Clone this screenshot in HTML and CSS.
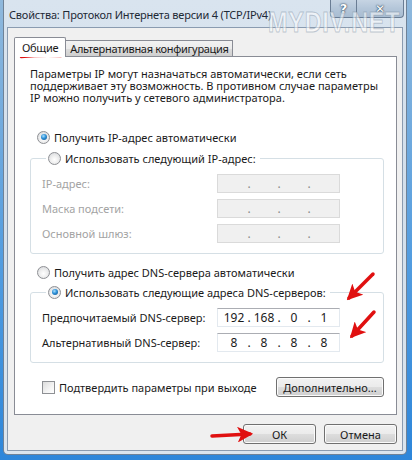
FILE: index.html
```html
<!DOCTYPE html>
<html lang="ru">
<head>
    <meta charset="UTF-8">
    <title>Свойства: Протокол Интернета версии 4 (TCP/IPv4)</title>
    <link rel="stylesheet" href="styles.css">
</head>
<body>
    <div class="window">
        <div class="titlebar">
            <span class="title">Свойства: Протокол Интернета версии 4 (TCP/IPv4)</span>
            <div class="caption-buttons">
                <div class="cap-btn help">?</div>
                <div class="cap-btn close">✕</div>
            </div>
        </div>
        <div class="watermark">MYDIV.NET</div>

        <div class="client">
            <div class="tabs">
                <div class="tab active">Общие</div>
                <div class="tab">Альтернативная конфигурация</div>
            </div>
            <div class="panel">
                <p class="desc">Параметры IP могут назначаться автоматически, если сеть<br>поддерживает эту возможность. В противном случае параметры<br>IP можно получить у сетевого администратора.</p>

                <div class="option first">
                    <span class="radio checked"></span>Получить IP-адрес автоматически
                </div>

                <fieldset class="group">
                    <legend><span class="radio"></span>Использовать следующий IP-адрес:</legend>
                    <div class="row disabled">
                        <span class="label">IP-адрес:</span>
                        <div class="ipbox off"><span></span><i>.</i><span></span><i>.</i><span></span><i>.</i><span></span></div>
                    </div>
                    <div class="row disabled">
                        <span class="label">Маска подсети:</span>
                        <div class="ipbox off"><span></span><i>.</i><span></span><i>.</i><span></span><i>.</i><span></span></div>
                    </div>
                    <div class="row disabled">
                        <span class="label">Основной шлюз:</span>
                        <div class="ipbox off"><span></span><i>.</i><span></span><i>.</i><span></span><i>.</i><span></span></div>
                    </div>
                </fieldset>

                <div class="option dns-auto">
                    <span class="radio"></span>Получить адрес DNS-сервера автоматически
                </div>

                <fieldset class="group dns">
                    <legend><span class="radio checked"></span>Использовать следующие адреса DNS-серверов:</legend>
                    <div class="row">
                        <span class="label">Предпочитаемый DNS-сервер:</span>
                        <div class="ipbox"><span>192</span><i>.</i><span>168</span><i>.</i><span>0</span><i>.</i><span>1</span></div>
                    </div>
                    <div class="row">
                        <span class="label">Альтернативный DNS-сервер:</span>
                        <div class="ipbox"><span>8</span><i>.</i><span>8</span><i>.</i><span>8</span><i>.</i><span>8</span></div>
                    </div>
                </fieldset>

                <div class="bottom-row">
                    <div class="check-opt"><span class="checkbox"></span>Подтвердить параметры при выходе</div>
                    <div class="btn advanced">Дополнительно...</div>
                </div>
            </div>

            <div class="dialog-buttons">
                <div class="btn ok">ОК</div>
                <div class="btn">Отмена</div>
            </div>
        </div>

        <!-- red marks drawn over the screenshot -->
        <svg class="marks" width="412" height="460" viewBox="0 0 412 460">
            <defs>
                <marker id="head" viewBox="0 0 10 10" refX="8" refY="5" markerWidth="4.5" markerHeight="4.5" orient="auto">
                    <path d="M0 0 L10 5 L0 10 L2.5 5 Z" fill="#e01010"/>
                </marker>
            </defs>
            <path d="M20 57 Q40 55 60 56" stroke="#e01010" stroke-width="2.5" fill="none" stroke-linecap="round"/>
            <path d="M372 274 L348 298" stroke="#e01010" stroke-width="3.5" stroke-linecap="round" marker-end="url(#head)"/>
            <path d="M373 312 L351 336" stroke="#e01010" stroke-width="3.5" stroke-linecap="round" marker-end="url(#head)"/>
            <path d="M211 436 L249 434" stroke="#e01010" stroke-width="3.5" stroke-linecap="round" marker-end="url(#head)"/>
        </svg>
    </div>
</body>
</html>
```

FILE: styles.css
```css
body {
    margin: 0;
    width: 412px;
    height: 460px;
    overflow: hidden;
    background: linear-gradient(180deg, #8fb8dc 0%, #4f9be0 60%, #2d86da 100%);
    font-family: "Noto Sans", sans-serif;
    font-size: 11px;
    color: #1a1a1a;
}
.window {
    position: relative;
    margin-left: 3px;
    width: 404px;
    height: 455px;
    background: linear-gradient(180deg, #d9e4ef 0%, #d3dfeb 40%, #dbe5ee 100%);
    border: 1px solid #6f8297;
    border-top: none;
    border-radius: 0 0 5px 5px;
    box-sizing: border-box;
    display: flex;
    flex-direction: column;
}
.titlebar {
    height: 27px;
    display: flex;
    align-items: flex-start;
    justify-content: space-between;
}
.title {
    margin: 7px 0 0 5px;
    font-size: 11px;
    letter-spacing: -0.2px;
    color: #1e2a36;
}
.caption-buttons {
    display: flex;
    margin-right: 2px;
}
.cap-btn {
    height: 18px;
    display: flex;
    align-items: center;
    justify-content: center;
    border: 1px solid #6a7d94;
    border-top: none;
    background: linear-gradient(180deg, #c6d4e3 0%, #b4c6d9 50%, #a9bdd2 100%);
    color: #fff;
    font-weight: bold;
    font-family: "DejaVu Sans", sans-serif;
    text-shadow: 0 0 2px #243a55, 0 0 1px #243a55;
    box-sizing: border-box;
}
.cap-btn.help {
    width: 27px;
    font-size: 13px;
    border-radius: 0 0 0 4px;
}
.cap-btn.close {
    width: 47px;
    font-size: 12px;
    border-left: none;
    border-radius: 0 0 4px 0;
}
.watermark {
    position: absolute;
    left: 264px;
    top: 5px;
    font-family: "Liberation Sans", sans-serif;
    font-weight: bold;
    font-size: 30px;
    color: rgba(255, 255, 255, 0.55);
    -webkit-text-stroke: 1px rgba(120, 140, 160, 0.45);
    transform: scaleX(0.78);
    transform-origin: left top;
    letter-spacing: 1px;
}
.client {
    flex: 1;
    margin: 0 3px 3px 3px;
    background: #f0f0f0;
    border: 1px solid #8a9bb0;
    padding: 9px 5px 0 6px;
    display: flex;
    flex-direction: column;
}
.tabs {
    display: flex;
    align-items: flex-end;
    height: 19px;
    position: relative;
    z-index: 1;
}
.tab {
    height: 16px;
    line-height: 15px;
    padding: 0 3px 0 4px;
    border: 1px solid #898c95;
    border-bottom: none;
    background: linear-gradient(180deg, #f2f2f2 0%, #ebebeb 50%, #dddddd 51%, #cfcfcf 100%);
    box-sizing: border-box;
    margin-left: -1px;
    color: #1a1a1a;
    letter-spacing: -0.3px;
}
.tab.active {
    height: 20px;
    line-height: 19px;
    padding: 0 7px 0 7px;
    background: #fff;
    margin-left: 0;
    margin-bottom: -1px;
    border-radius: 2px 2px 0 0;
}
.tab.active + .tab {
    margin-left: 0;
    border-left: none;
}
.panel {
    height: 359px;
    background: #fff;
    border: 1px solid #898c95;
    box-sizing: border-box;
    padding: 11px 12px 0 15px;
}
.desc {
    margin: 0;
    line-height: 12px;
    white-space: nowrap;
}
.option {
    display: flex;
    align-items: center;
    height: 16px;
    margin-left: 7px;
}
.option.first {
    margin-top: 25px;
}
.option.dns-auto {
    margin-top: 10px;
}
.radio {
    width: 13px;
    height: 13px;
    box-sizing: border-box;
    border-radius: 50%;
    border: 1px solid #8e9094;
    background: radial-gradient(circle at 50% 60%, #ffffff 0%, #f0f0f0 40%, #d2d4d8 100%);
    margin-right: 4px;
    display: inline-flex;
    align-items: center;
    justify-content: center;
    flex: none;
}
.radio.checked::after {
    content: "";
    width: 6px;
    height: 6px;
    border-radius: 50%;
    background: radial-gradient(circle at 40% 35%, #a8e0ff 0%, #2c8fd6 45%, #114f87 100%);
}
.group {
    margin: 5px 0 0 0;
    padding: 2px 10px 10px 11px;
    border: 1px solid #d5dfe5;
    border-radius: 3px;
}
.group legend {
    display: flex;
    align-items: center;
    height: 16px;
    padding: 0 4px 0 2px;
    margin-left: 4px;
}
.row {
    display: flex;
    align-items: center;
    height: 19px;
    margin-top: 6px;
}
.row .label {
    width: 175px;
}
.row.disabled .label {
    color: #a3a3a3;
}
.ipbox {
    width: 123px;
    height: 19px;
    box-sizing: border-box;
    border: 1px solid #e3e9ef;
    border-top-color: #abadb3;
    background: #fff;
    display: flex;
    align-items: center;
    padding-left: 4px;
    font-size: 12px;
    color: #1a1a1a;
}
.ipbox span {
    width: 24px;
    text-align: center;
}
.ipbox i {
    width: 6px;
    font-style: normal;
    text-align: center;
}
.ipbox.off {
    background: #f0f0f0;
    border-color: #dadada;
    color: #8a8a8a;
}
.group.dns {
    margin-top: 4px;
    padding-bottom: 10px;
}
.bottom-row {
    display: flex;
    align-items: center;
    justify-content: space-between;
    margin-top: 14px;
}
.check-opt {
    display: flex;
    align-items: center;
    margin-left: 12px;
}
.checkbox {
    width: 13px;
    height: 13px;
    box-sizing: border-box;
    border: 1px solid #8e9094;
    background: linear-gradient(135deg, #dcdcdc 0%, #f4f4f4 60%, #ffffff 100%);
    margin-right: 4px;
}
.btn {
    height: 20px;
    box-sizing: border-box;
    border: 1px solid #707070;
    border-radius: 3px;
    background: linear-gradient(180deg, #f2f2f2 0%, #ebebeb 50%, #dddddd 51%, #cfcfcf 100%);
    box-shadow: inset 0 0 0 1px #fbfbfb;
    display: flex;
    align-items: center;
    justify-content: center;
    color: #1a1a1a;
}
.btn.advanced {
    width: 108px;
}
.dialog-buttons {
    display: flex;
    justify-content: flex-end;
    gap: 8px;
    margin-top: 9px;
}
.dialog-buttons .btn {
    width: 73px;
}
.marks {
    position: absolute;
    left: -3px;
    top: 0;
    pointer-events: none;
}
```
